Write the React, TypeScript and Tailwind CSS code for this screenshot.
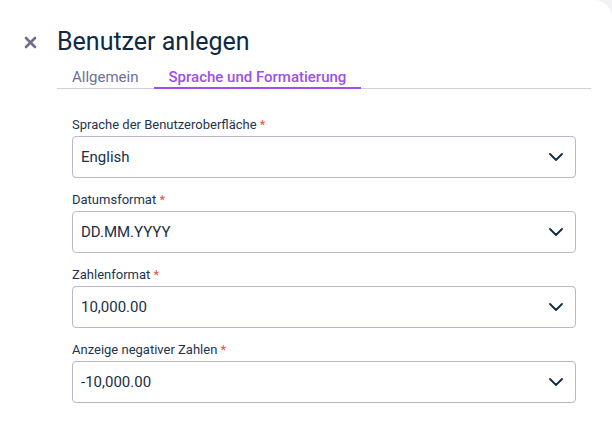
import React from "react";

interface SelectFieldProps {
    label: string;
    value: string;
}

const Chevron = () => (
    <svg width="14" height="8" viewBox="0 0 14 8" fill="none">
        <path d="M1 1l6 6 6-6" stroke="#0f2a44" strokeWidth="1.8" strokeLinecap="round" strokeLinejoin="round" />
    </svg>
);

const SelectField: React.FC<SelectFieldProps> = ({ label, value }) => {
    return (
        <div className="flex flex-col">
            <label className="text-[13px] leading-[16px] text-[#1d3550] mb-[3px]">
                {label} <span className="text-[#e5533d]">*</span>
            </label>
            <div className="flex items-center justify-between h-[42px] pl-[8px] pr-[12px] border border-[#b8b8cc] rounded-[4px] bg-white">
                <span className="text-[15px] text-[#1a2f44]">{value}</span>
                <Chevron />
            </div>
        </div>
    );
};

const fields = [
    { label: "Sprache der Benutzeroberfläche", value: "English" },
    { label: "Datumsformat", value: "DD.MM.YYYY" },
    { label: "Zahlenformat", value: "10,000.00" },
    { label: "Anzeige negativer Zahlen", value: "-10,000.00" },
];

export default function App() {
    return (
        <div className="w-[612px] h-[435px] bg-[#f2f2f4] font-['Roboto',sans-serif] overflow-hidden">
            <div className="w-full h-full bg-white rounded-tr-[18px] pt-[28px]">
                {/* header */}
                <div className="flex items-center pl-[24px]">
                    <svg width="13" height="13" viewBox="0 0 13 13" className="mr-[20px]">
                        <path d="M2 2l9 9M11 2l-9 9" stroke="#6c6e8c" strokeWidth="2.6" strokeLinecap="round" />
                    </svg>
                    <h1 className="text-[25px] leading-[28px] text-[#0f2a44]">Benutzer anlegen</h1>
                </div>

                {/* tabs */}
                <div className="flex ml-[57px] mr-[21px] mt-[12px] border-b border-[#cfcfdc]">
                    <div className="px-[15px] leading-[18px] pb-[1px] text-[15px] text-[#6e7191]">Allgemein</div>
                    <div className="px-[15px] leading-[18px] pb-[1px] text-[15px] font-medium text-[#a04fe8] border-b-2 border-[#a04fe8] -mb-px">
                        Sprache und Formatierung
                    </div>
                </div>

                {/* form */}
                <div className="flex flex-col gap-[14px] mr-[36px] ml-[72px] mt-[28px]">
                    {fields.map((f) => (
                        <SelectField key={f.label} label={f.label} value={f.value} />
                    ))}
                </div>
            </div>
        </div>
    );
}
